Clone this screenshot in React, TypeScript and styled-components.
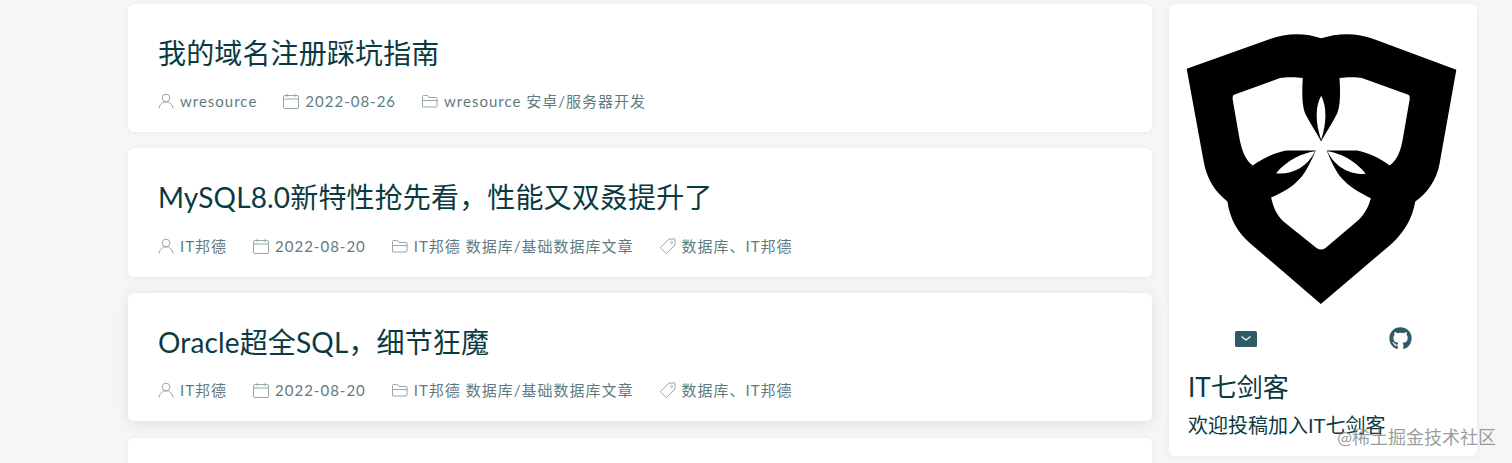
import React from 'react';
import styled, { createGlobalStyle } from 'styled-components';
import { FaGithub } from 'react-icons/fa';

const GlobalStyle = createGlobalStyle`
  html, body {
    margin: 0;
    padding: 0;
    background: #f6f6f6;
    height: 463px;
    overflow: hidden;
    font-family: Lato, "Noto Sans CJK SC", sans-serif;
  }
  * { box-sizing: border-box; }
`;

const Page = styled.div`
  display: flex;
  align-items: flex-start;
  gap: 17px;
  padding: 3.75px 0 0 128px;
  width: 1512px;
  height: 463px;
  overflow: hidden;
`;

const Main = styled.main`
  display: flex;
  flex-direction: column;
  gap: 16.6px;
  width: 1024px;
  flex-shrink: 0;
`;

const Card = styled.article<{ $raised?: boolean }>`
  height: 128.1px;
  flex-shrink: 0;
  padding: 28px 30px 20px;
  background: #fff;
  border-radius: 6px;
  box-shadow: ${(p) =>
    p.$raised ? '0 2px 14px rgba(0, 0, 0, 0.1)' : '0 1px 6px rgba(0, 0, 0, 0.06)'};
`;

const Title = styled.h2`
  margin: 0 0 16.1px;
  font-size: 28px;
  font-weight: 400;
  letter-spacing: 0.15px;
  line-height: 42px;
  color: #0b3a42;
  white-space: nowrap;
`;

const Meta = styled.div`
  display: flex;
  gap: 26px;
  height: 22px;
`;

const MetaItem = styled.span`
  display: flex;
  align-items: center;
  gap: 6px;
  font-size: 15px;
  letter-spacing: 1px;
  line-height: 22px;
  color: #5f7b80;
  white-space: nowrap;

  svg {
    flex-shrink: 0;
    width: 16px;
    height: 16px;
    fill: none;
    stroke: #97a6a9;
    stroke-width: 1;
  }
`;

const Sidebar = styled.aside`
  display: flex;
  flex-direction: column;
  width: 308px;
  height: 452px;
  flex-shrink: 0;
  padding: 29px 19px 0;
  background: #fff;
  border-radius: 6px;
  box-shadow: 0 1px 6px rgba(0, 0, 0, 0.06);
`;

const Logo = styled.svg`
  display: block;
  width: 273px;
  height: 272px;
  margin-left: -3px;
  flex-shrink: 0;
`;

const Contacts = styled.div`
  display: grid;
  grid-template-columns: 1fr 1fr;
  justify-items: center;
  align-items: center;
  height: 24px;
  margin: 22px -19px 0;
  color: #2f5a66;
`;

const Name = styled.h3`
  margin: 18px 0 0;
  font-size: 26px;
  font-weight: 400;
  line-height: 36px;
  color: #0b3a42;
`;

const Description = styled.p`
  margin: 5px 0 0;
  font-size: 20px;
  line-height: 30px;
  color: #0b3a42;
  white-space: nowrap;
`;

const Watermark = styled.div`
  position: absolute;
  left: 1337px;
  top: 424px;
  font-size: 18px;
  line-height: 26px;
  color: rgba(120, 125, 128, 0.75);
  white-space: nowrap;
`;

const UserIcon = () => (
  <svg viewBox="0 0 16 16">
    <circle cx="8" cy="5" r="3.8" />
    <path d="M1 15.500c.4-3.800 3.200-6.600 7-6.600s6.600 2.800 7 6.600" />
  </svg>
);

const CalendarIcon = () => (
  <svg viewBox="0 0 16 16">
    <rect x="0.5" y="2.500" width="15" height="13" rx="1.500" />
    <path d="M.5 6h15M4 .8v3M12 .8v3" />
  </svg>
);

const FolderIcon = () => (
  <svg viewBox="0 0 16 16">
    <path d="M.5 13V3.500c0-.6.400-1 1-1h4l1.500 2h7c.6 0 1 .4 1 1V13c0 .6-.4 1-1 1h-13c-.6 0-1-.4-1-1z" />
    <path d="M.5 7.500h15" />
  </svg>
);

const TagIcon = () => (
  <svg viewBox="0 0 16 16">
    <path d="M9 1h5.500c.3 0 .5.200.5.500V7L6.800 15.200c-.3.300-.7.300-1 0L.8 10.200c-.3-.3-.3-.7 0-1z" />
    <circle cx="11.500" cy="4.500" r="1" />
  </svg>
);

const MailIcon = () => (
  <svg width="22" height="16" viewBox="0 0 22 16">
    <rect width="22" height="16" rx="1.500" fill="currentColor" />
    <path d="M6.500 5.500l4.500 3.500 4.500-3.500" fill="none" stroke="#fff" strokeWidth="1.200" />
  </svg>
);

const posts = [
  {
    title: '我的域名注册踩坑指南',
    author: 'wresource',
    date: '2022-08-26',
    category: 'wresource 安卓/服务器开发',
  },
  {
    title: 'MySQL8.0新特性抢先看，性能又双叒提升了',
    author: 'IT邦德',
    date: '2022-08-20',
    category: 'IT邦德 数据库/基础数据库文章',
    tags: '数据库、IT邦德',
  },
  {
    title: 'Oracle超全SQL，细节狂魔',
    author: 'IT邦德',
    date: '2022-08-20',
    category: 'IT邦德 数据库/基础数据库文章',
    tags: '数据库、IT邦德',
    raised: true,
  },
];

const App: React.FC = () => (
  <>
    <GlobalStyle />
    <Page>
      <Main>
        {posts.map((post) => (
          <Card key={post.title} $raised={post.raised}>
            <Title>{post.title}</Title>
            <Meta>
              <MetaItem><UserIcon />{post.author}</MetaItem>
              <MetaItem><CalendarIcon />{post.date}</MetaItem>
              <MetaItem><FolderIcon />{post.category}</MetaItem>
              {post.tags && <MetaItem><TagIcon />{post.tags}</MetaItem>}
            </Meta>
          </Card>
        ))}
        <Card />
      </Main>
      <Sidebar>
        <Logo viewBox="75 100 818 815">
          <path
            fillRule="evenodd"
            fill="#000"
            d="M80 207L330 118C380 98 440 100 483 116C530 100 590 98 640 118L888 210L838 490C830 540 800 580 765 605C755 660 730 700 690 735L482 912L270 730C235 700 210 660 202 605C165 575 140 540 130 480Z
            M483 425C470 400 450 370 440 350C425 330 425 280 428 235C410 232 375 232 360 235L222 285C218 288 217 292 218 300L238 415C245 450 255 480 278 497C310 475 340 460 378 452L467 452C450 490 440 510 425 530C400 560 365 580 333 593C340 625 350 645 370 665L470 745C478 750 488 750 495 745L595 660C615 640 625 620 632 595C600 580 565 560 540 530C525 510 510 480 500 452L590 452C628 460 660 475 688 497C712 480 722 450 728 415L748 300C749 292 748 288 744 285L605 235C590 232 560 232 538 235C541 280 541 330 526 350C516 370 496 400 483 425Z
            M483 288C500 320 500 370 483 420C465 370 465 320 483 288Z
            M465 454C430 458 380 480 348 520C390 525 440 505 465 454Z
            M502 454C535 458 585 480 617 522C575 525 525 505 502 454Z"
          />
        </Logo>
        <Contacts>
          <MailIcon />
          <FaGithub size={23} />
        </Contacts>
        <Name>IT七剑客</Name>
        <Description>欢迎投稿加入IT七剑客</Description>
      </Sidebar>
    </Page>
    <Watermark>@稀土掘金技术社区</Watermark>
  </>
);

export default App;
